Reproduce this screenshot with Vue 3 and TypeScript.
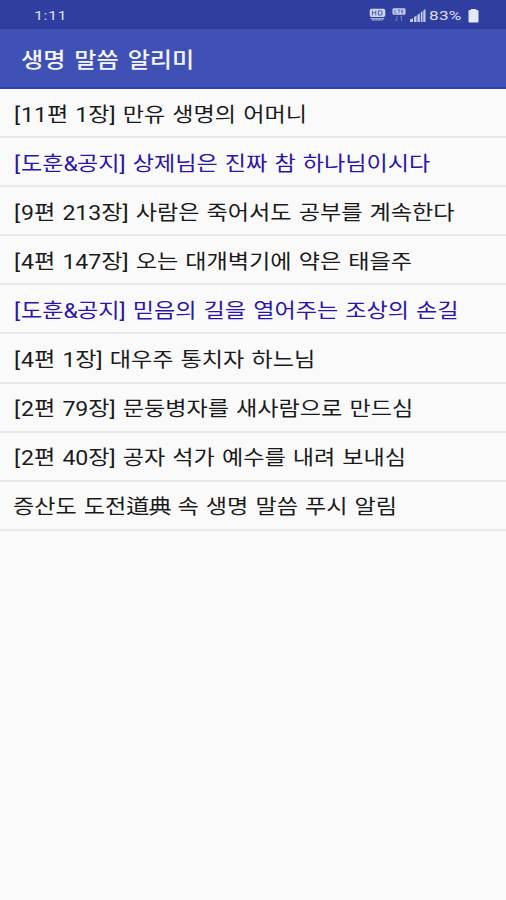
<script setup lang="ts">
interface Message {
  text: string
  notice?: boolean
}

interface Segment {
  value: string
  kind: string
}

const messages: Message[] = [
  { text: '[11편 1장] 만유 생명의 어머니' },
  { text: '[도훈&공지] 상제님은 진짜 참 하나님이시다', notice: true },
  { text: '[9편 213장] 사람은 죽어서도 공부를 계속한다' },
  { text: '[4편 147장] 오는 대개벽기에 약은 태을주' },
  { text: '[도훈&공지] 믿음의 길을 열어주는 조상의 손길', notice: true },
  { text: '[4편 1장] 대우주 통치자 하느님' },
  { text: '[2편 79장] 문둥병자를 새사람으로 만드심' },
  { text: '[2편 40장] 공자 석가 예수를 내려 보내심' },
  { text: '증산도 도전道典 속 생명 말씀 푸시 알림' },
]

function kindOf(value: string): string {
  if (value === '[') return 'bracket'
  if (value === '&') return 'ampersand'
  return /^[\u4e00-\u9fff]/.test(value) ? 'hanja' : 'plain'
}

// Hanja, brackets and ampersands each need their own tracking beside Hangul.
function segments(text: string): Segment[] {
  return text
    .split(/([\u4e00-\u9fff]+|\[|&)/)
    .filter(Boolean)
    .map((value) => ({ value, kind: kindOf(value) }))
}
</script>

<template>
  <div class="screen">
    <header class="status">
      <span class="time">1:11</span>
      <div class="indicators">
        <svg class="hd" width="17" height="14" viewBox="0 0 17 14">
          <rect x="0.7" y="0.7" width="15.6" height="8.2" rx="2" fill="#d0d6f1" />
          <path d="M3.5 2.4v5M6.8 2.4v5M3.5 4.8h3.3M9.5 2.8h1.8c2.4 0 2.4 4.2 0 4.2H9.5z" fill="none" stroke="#5563b3" stroke-width="1.1" />
          <path d="M1.5 10.6h14M3 12h11" stroke="#b1badf" stroke-width="1.2" stroke-dasharray="2.4 .4" />
        </svg>
        <svg class="lte" width="14" height="14" viewBox="0 0 14 14">
          <rect x="0.5" y="0.3" width="13" height="6.5" rx="1.3" fill="#c8cfee" />
          <path d="M2.8 1.8v3.4h2M5.5 2h3M7 2v3.3M11.4 2H9.6v3h1.8M9.6 3.5h1.6" fill="none" stroke="#5563b3" stroke-width=".8" />
          <path d="M4.8 8v5M3.5 11.5l1.3 1.3M9.5 13V8M8.2 9.4 9.5 8" fill="none" stroke="#6876c0" stroke-width="1.1" />
        </svg>
        <svg class="signal" width="16" height="13" viewBox="0 0 16 13">
          <path d="M0 13v-2.5L3 9.2V13zM4 13V8.2L6.5 6.5V13zM7.4 13V6L9.8 4.3V13zM10.8 13V3.5l1.7-1.3V13zM13.3 13V1.6L15.5 0v13z" fill="#c3cbec" />
        </svg>
        <span class="percent">83%</span>
        <svg class="battery" width="11" height="14" viewBox="0 0 11 14">
          <path d="M3 1V0h5v1h1.5q1 0 1 1v10.5q0 1-1 1h-8q-1 0-1-1V2q0-1 1-1z" fill="#e4e8fb" />
        </svg>
      </div>
    </header>
    <div class="toolbar">
      <h1 class="title">생명 말씀 알리미</h1>
    </div>
    <ul class="list">
      <li v-for="message in messages" :key="message.text" class="row" :class="{ notice: message.notice }">
        <span class="label"><span v-for="(part, i) in segments(message.text)" :key="i" :class="part.kind">{{ part.value }}</span></span>
      </li>
    </ul>
  </div>
</template>

<style>
body {
  margin: 0;
  background: #fafafa;
}
</style>

<style scoped>
.screen {
  width: 100%;
  height: 900px;
  overflow: hidden;
  background: #fafafa;
  font-family: Roboto, "Noto Sans CJK KR", sans-serif;
}
.status {
  box-sizing: border-box;
  display: flex;
  align-items: center;
  justify-content: space-between;
  height: 29px;
  padding: 2px 27px 0 34px;
  background: #303f9f;
  color: #d9def5;
  font-size: 13px;
}
.time {
  transform: scaleX(1.26);
  transform-origin: left;
  letter-spacing: 0.3px;
}
.indicators {
  display: flex;
  align-items: center;
}
.hd,
.lte {
  position: relative;
  top: -1px;
}
.lte {
  margin-left: 6px;
}
.signal {
  margin-left: 4px;
}
.percent {
  width: 32px;
  margin: 0 7px 0 3px;
  transform: scaleX(1.32);
  transform-origin: left;
  letter-spacing: 0.2px;
}
.toolbar {
  box-sizing: border-box;
  display: flex;
  align-items: center;
  height: 60px;
  padding: 4px 21px 0;
  background: #3f51b5;
  border-bottom: 2px solid #2c43ae;
}
.title {
  margin: 0;
  color: #f3f5ff;
  font-size: 21px;
  font-weight: 500;
  line-height: 30px;
  white-space: nowrap;
  word-spacing: 2.5px;
  transform: scaleX(1.15);
  transform-origin: left;
}
.list {
  margin: 0;
  padding: 0;
  list-style: none;
}
.row {
  box-sizing: border-box;
  display: flex;
  align-items: center;
  height: 49.1px;
  padding: 4px 0 0 13px;
  border-bottom: 2px solid #e8e8e8;
  color: #1a1a1a;
}
.notice {
  color: #2a14aa;
}
.label {
  font-size: 20px;
  line-height: 30px;
  white-space: nowrap;
  word-spacing: 1.15px;
  transform: scaleX(1.155);
  transform-origin: left;
}
.bracket {
  margin-left: 0.8px;
  letter-spacing: 0.9px;
}
.ampersand {
  letter-spacing: -0.8px;
}
.hanja {
  letter-spacing: -0.9px;
}
</style>
